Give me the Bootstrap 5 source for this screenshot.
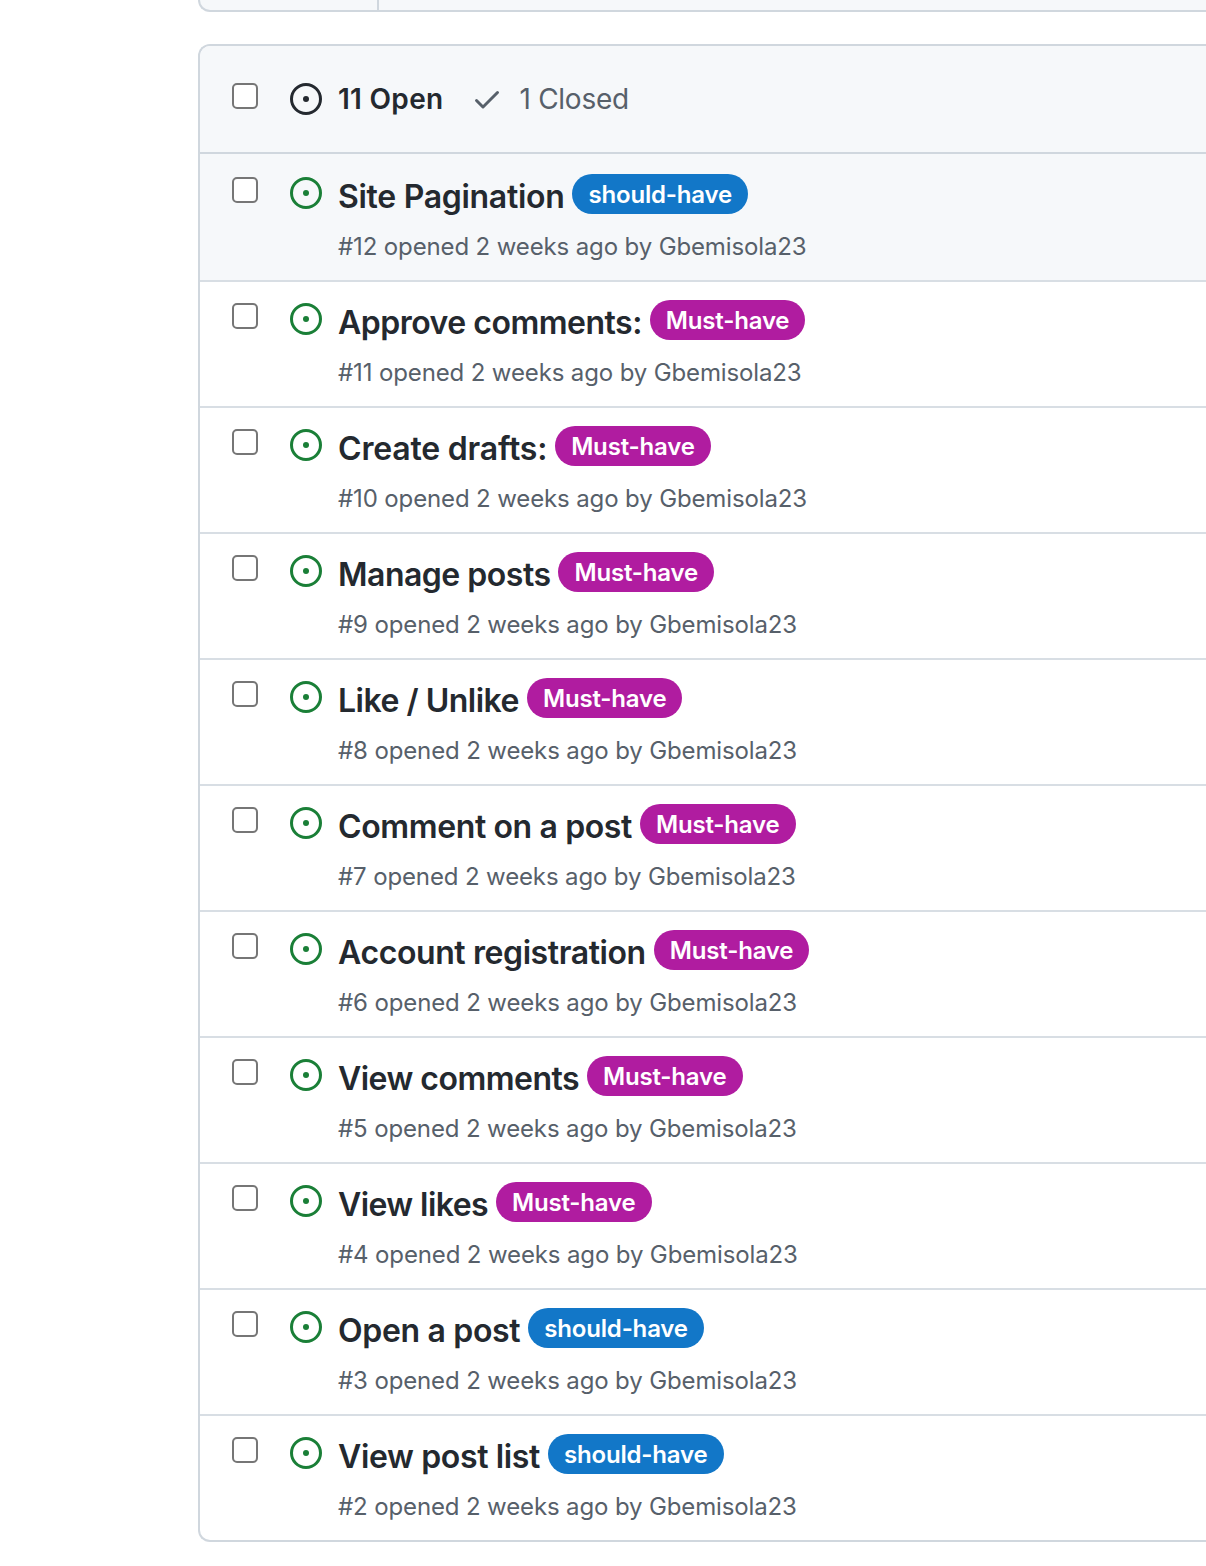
<!DOCTYPE html>
<html lang="en">
<head>
<meta charset="utf-8">
<meta name="viewport" content="width=device-width, initial-scale=1">
<title>Issues</title>
<link rel="stylesheet" href="https://cdn.jsdelivr.net/npm/bootstrap@5.3.0/dist/css/bootstrap.min.css">
<style>
  body { font-family: Inter, "Liberation Sans", sans-serif; color: #24292f; background: #fff; overflow: hidden; }
  .page-wrap { margin-left: 198px; }
  .filter-bar { height: 12px; border: 2px solid #d0d7de; border-width: 0 0 2px 2px; border-radius: 0 0 0 12px; background: #f6f8fa; margin-bottom: 32px; }
  .filter-btn { width: 179px; border-right: 2px solid #d0d7de; }
  .issue-box { border: 2px solid #d0d7de; border-right: 0; border-radius: 12px 0 0 12px; overflow: hidden; }
  .issue-head { height: 108px; background: #f6f8fa; border-bottom: 2px solid #d0d7de; padding-left: 32px; font-size: 28px; line-height: 42px; }
  .issue-item { height: 126px; border-top: 2px solid #d8dee4; padding: 18px 0 0 32px; }
  .issue-item:first-child { border-top-color: transparent; background: #f6f8fa; background-clip: border-box; }
  .tick { appearance: none; width: 26px; height: 26px; border: 2px solid #767676; border-radius: 5px; background: #fff; margin: 3px 32px 0 0; flex: none; }
  .issue-head .tick { margin-top: 37px; }
  .state-icon { width: 32px; height: 32px; fill: #1a7f37; margin: 3px 16px 0 0; flex: none; }
  .issue-head .state-icon { fill: #24292f; margin-top: 37px; }
  .issue-head .check-icon { width: 32px; height: 32px; fill: #57606a; margin: 37px 16px 0 28px; }
  .head-text { margin-top: 32px; }
  .open-count { letter-spacing: .28px; }
  .closed-count { letter-spacing: -.25px; color: #57606a; }
  .issue-title { font-size: 32px; font-weight: 600; line-height: 46px; height: 44px; white-space: nowrap; margin-right: 8px; }
  .tag { height: 40px; border-radius: 20px; padding: 0 16px; font-size: 24px; font-weight: 600; line-height: 42px; letter-spacing: -.18px; color: #fff; white-space: nowrap; }
  .tag-must { background: #b01ca0; }
  .tag-should { background: #1277c8; }
  .issue-meta { font-size: 24px; line-height: 36px; letter-spacing: -.13px; color: #57606a; margin-top: 11px; }
</style>
<script src="https://cdn.jsdelivr.net/npm/bootstrap@5.3.0/dist/js/bootstrap.bundle.min.js"></script>
</head>
<body>
<svg class="d-none">
  <symbol id="issue" viewBox="0 0 16 16"><path d="M8 9.5a1.5 1.5 0 100-3 1.5 1.5 0 000 3z"/><path fill-rule="evenodd" d="M8 0a8 8 0 100 16A8 8 0 008 0zM1.5 8a6.5 6.5 0 1113 0 6.5 6.5 0 01-13 0z"/></symbol>
  <symbol id="check" viewBox="0 0 16 16"><path fill-rule="evenodd" d="M13.78 4.22a.75.75 0 010 1.06l-7.25 7.25a.75.75 0 01-1.06 0L2.22 9.28a.75.75 0 011.06-1.06L6 10.94l6.72-6.72a.75.75 0 011.06 0z"/></symbol>
</svg>
<main class="page-wrap">
  <div class="filter-bar d-flex"><div class="filter-btn"></div></div>
  <section class="issue-box">
    <header class="issue-head d-flex align-items-start">
      <input class="tick" type="checkbox" aria-label="Select all">
      <svg class="state-icon"><use href="#issue"/></svg>
      <span class="head-text open-count fw-semibold">11 Open</span>
      <svg class="check-icon"><use href="#check"/></svg>
      <span class="head-text closed-count">1 Closed</span>
    </header>
    <div id="issues"></div>
  </section>
</main>
<script>
  // number, title, tag, title tracking in px
  const issues = [
    [12, 'Site Pagination', 'should', -.3],
    [11, 'Approve comments:', 'must', -.5],
    [10, 'Create drafts:', 'must', -.2],
    [9, 'Manage posts', 'must', -.5],
    [8, 'Like / Unlike', 'must', -.5],
    [7, 'Comment on a post', 'must', -.38],
    [6, 'Account registration', 'must', -.4],
    [5, 'View comments', 'must', -.53],
    [4, 'View likes', 'must', -.58],
    [3, 'Open a post', 'should', -.33],
    [2, 'View post list', 'should', -.36]
  ];
  document.getElementById('issues').innerHTML = issues.map(([n, title, tag, track]) => `
    <article class="issue-item d-flex align-items-start">
      <input class="tick" type="checkbox" aria-label="Select issue">
      <svg class="state-icon"><use href="#issue"/></svg>
      <div>
        <div class="d-flex align-items-start"><span class="issue-title" style="letter-spacing:${track}px">${title}</span><span class="tag tag-${tag}">${tag === 'must' ? 'Must-have' : 'should-have'}</span></div>
        <div class="issue-meta">#${n} opened 2 weeks ago by Gbemisola23</div>
      </div>
    </article>`).join('');
</script>
</body>
</html>
